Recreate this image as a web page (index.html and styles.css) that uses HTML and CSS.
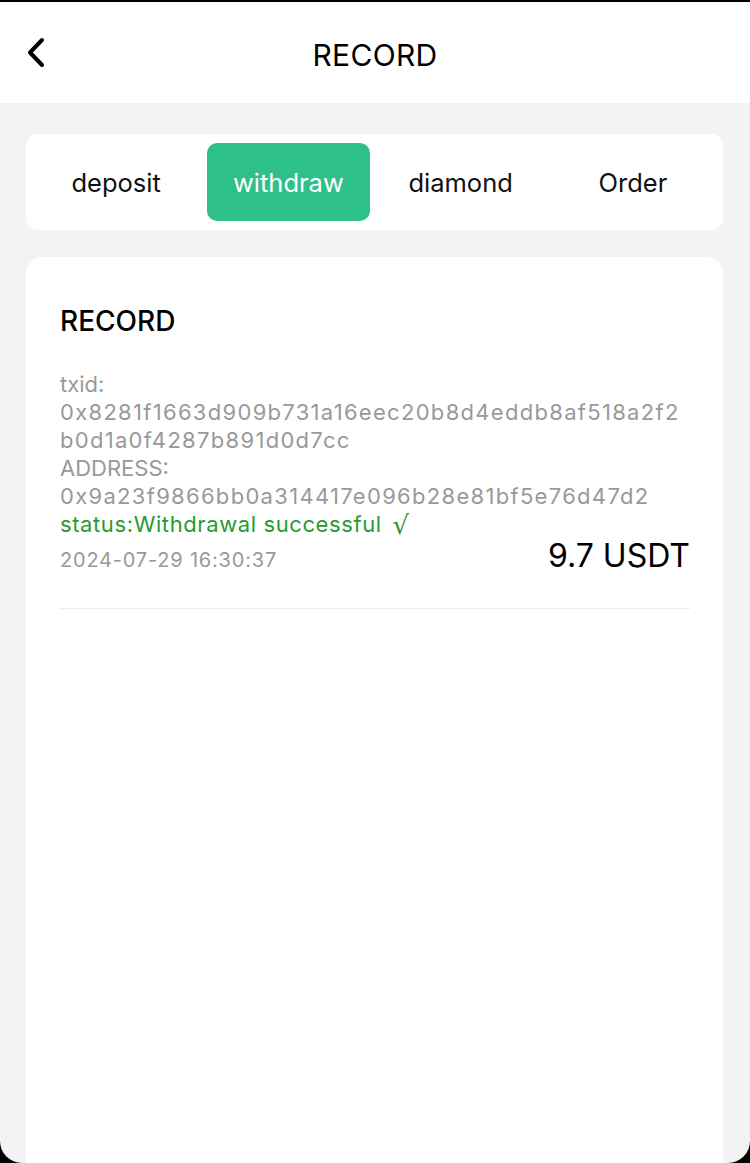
FILE: index.html
```html
<!DOCTYPE html>
<html>
<head>
<meta charset="utf-8">
<link rel="stylesheet" href="styles.css">
</head>
<body>
<div class="screen">
  <header class="topbar">
    <div class="back">
      <svg width="22" height="32" viewBox="0 0 22 32"><path d="M17 3 L5 15.5 L17 28" fill="none" stroke="#000" stroke-width="4" stroke-linecap="round" stroke-linejoin="round"/></svg>
    </div>
    <h1 class="title">RECORD</h1>
    <div></div>
  </header>
  <main class="content">
    <nav class="tabs">
      <div class="tab">deposit</div>
      <div class="tab active">withdraw</div>
      <div class="tab">diamond</div>
      <div class="tab">Order</div>
    </nav>
    <section class="card">
      <h2 class="card-title">RECORD</h2>
      <div class="record">
        <div class="info">
          <div class="line">txid:</div>
          <div class="line hash">0x8281f1663d909b731a16eec20b8d4eddb8af518a2f2b0d1a0f4287b891d0d7cc</div>
          <div class="line">ADDRESS:</div>
          <div class="line hash">0x9a23f9866bb0a314417e096b28e81bf5e76d47d2</div>
          <div class="line status">status:Withdrawal successful <span class="check">√</span></div>
        </div>
        <div class="bottom">
          <span class="date">2024-07-29 16:30:37</span>
          <span class="amount">9.7 USDT</span>
        </div>
      </div>
    </section>
  </main>
</div>
</body>
</html>
```

FILE: styles.css
```css
* { box-sizing: border-box; }
html, body { margin: 0; padding: 0; background: #000; }
body { font-family: Inter, "Noto Sans", sans-serif; }
.screen {
  width: 750px;
  height: 1163px;
  background: #f2f3f2;
  border-top: 2px solid #000;
  border-radius: 0 0 22px 22px;
  overflow: hidden;
  display: flex;
  flex-direction: column;
}
.topbar {
  height: 101px;
  background: #fff;
  display: grid;
  grid-template-columns: 1fr auto 1fr;
  align-items: center;
  flex-shrink: 0;
}
.back { padding-left: 25px; display: flex; align-items: center; }
.back svg { display: block; }
.title {
  margin: 0;
  padding-top: 4px;
  font-size: 30px;
  font-weight: 400;
  color: #000;
  letter-spacing: 0.3px;
}
.content {
  flex: 1;
  padding: 31px 27px 0 26px;
  display: flex;
  flex-direction: column;
  gap: 27px;
}
.tabs {
  background: #fff;
  border-radius: 12px;
  padding: 9px 4px;
  display: grid;
  grid-template-columns: repeat(4, 1fr);
  height: 96px;
}
.tab {
  margin: 0 4.5px;
  border-radius: 10px;
  display: flex;
  align-items: center;
  justify-content: center;
  font-size: 25.5px;
  color: #111;
}
.tab.active { background: #2ec08a; color: #fff; }
.card {
  flex: 1;
  background: #fff;
  border-radius: 16px 16px 0 0;
  padding: 46px 33px 0 34px;
}
.card-title {
  margin: 0 0 31px;
  font-size: 28px;
  font-weight: 500;
  color: #000;
  line-height: 36px;
}
.record {
  border-bottom: 1px solid #ececec;
  padding-bottom: 34px;
}
.line {
  font-size: 22px;
  line-height: 28px;
  height: 28px;
  color: #999;
}
.hash { word-break: break-all; letter-spacing: 1.3px; height: auto; }
.status { color: #2b9a2e; letter-spacing: 0.6px; }
.check {
  font-family: "DejaVu Sans", sans-serif;
  font-size: 26px;
  line-height: 20px;
  margin-left: 4px;
  vertical-align: -2px;
}
.bottom {
  display: flex;
  justify-content: space-between;
  align-items: flex-end;
}
.date { font-size: 20px; line-height: 28px; color: #999; letter-spacing: 0.8px; }
.amount { font-size: 32px; line-height: 36px; color: #000; }
```
